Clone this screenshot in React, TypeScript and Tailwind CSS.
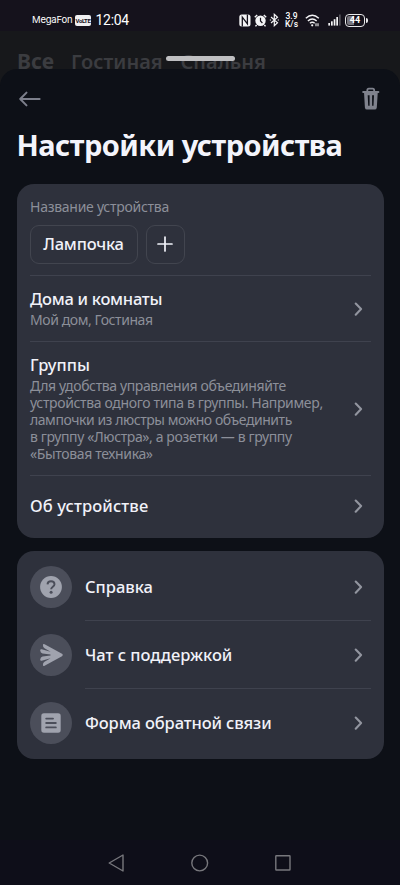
import type { ReactNode } from "react";

const ChevronIcon = () => (
    <svg width="24" height="24" viewBox="0 0 24 24" fill="none" stroke="#92959f" strokeWidth="2.1" strokeLinecap="round" strokeLinejoin="round" className="shrink-0">
        <path d="M8.7 6.500 L14.100 12.100 L8.700 17.700" />
    </svg>
);

const BackIcon = () => (
    <svg width="24" height="18" viewBox="0 0 24 18" fill="none" stroke="#7c7f8b" strokeWidth="2" strokeLinecap="round" strokeLinejoin="round">
        <path d="M21.600 9 H2.200 M8.500 2.600 L2.200 9 L8.500 15.400" />
    </svg>
);

const TrashIcon = () => (
    <svg width="18" height="24" viewBox="0 0 18 24" fill="none">
        <path d="M5.3 4.6 V3.4 Q5.3 1.700 6.8 1.700 H10.7 Q12.2 1.700 12.2 3.4 V4.6" stroke="#7f828d" strokeWidth="1.8" />
        <path d="M1.2 5 H16.4" stroke="#7f828d" strokeWidth="2" strokeLinecap="round" />
        <path fillRule="evenodd" fill="#7f828d" d="M2 5 H15.8 L14.8 20.4 Q14.6 22.6 12.6 22.6 H5 Q3.100 22.6 2.9 20.4 Z M5.7 8.300 L6.2 18.8 H7.6 V8.300 Z M10.100 8.300 V18.8 H11.5 L12 8.300 Z" />
    </svg>
);

const HelpIcon = () => (
    <svg width="24" height="24" viewBox="0 0 24 24" fill="none">
        <circle cx="12" cy="12" r="10.9" fill="#a0a3ae" />
        <path d="M8.500 9.400 C8.600 7.400 10 6.300 12 6.300 C14.100 6.300 15.500 7.500 15.500 9.200 C15.500 11.700 12.100 11.700 12.100 14.300" stroke="#4b4e5a" strokeWidth="1.9" />
        <circle cx="12.100" cy="17.200" r="1.500" fill="#4b4e5a" />
    </svg>
);

const SendIcon = () => (
    <svg width="24" height="24" viewBox="0 0 24 24" fill="#a0a3ae">
        <path d="M5.600 1.200 Q4 0.600 3.900 2 Q3.900 4.300 5.500 5.200 L11.500 8.700 L2.700 6.200 Q1.100 5.900 1.200 7.500 Q1.400 10 3.600 10.400 L11.500 11.600 V12.400 L3.600 13.600 Q1.400 14 1.200 16.500 Q1.100 18.100 2.700 17.800 L11.500 15.300 L5.500 18.800 Q3.900 19.700 3.900 22 Q4 23.400 5.600 22.800 L23 13.200 Q24.500 12 23 10.800 Z" />
    </svg>
);

const FormIcon = () => (
    <svg width="24" height="24" viewBox="0 0 24 24" fill="none">
        <rect x="2.300" y="2.300" width="19.400" height="19.400" rx="2.600" fill="#a0a3ae" />
        <path d="M7.200 7.600 H14 M7.200 12 H16.800 M7.200 16.400 H16.800" stroke="#4b4e5a" strokeWidth="1.900" strokeLinecap="round" />
    </svg>
);

const StatusIcons = () => (
    <div className="flex items-center text-white">
        {/* nfc */}
        <svg width="12" height="13" viewBox="0 0 12 13">
            <rect x="0.300" y="0.500" width="11.200" height="12" rx="2.500" fill="#f4f4f6" />
            <path d="M3.300 12.500 V3.200 L8.400 9.800 V0.500" fill="none" stroke="#15121c" strokeWidth="1.300" />
        </svg>
        {/* alarm */}
        <svg width="13" height="13" viewBox="0 0 13 13" className="ml-[3px]">
            <circle cx="6.500" cy="6.800" r="5.200" fill="#f4f4f6" />
            <path d="M0.800 3.200 L3.200 0.900 M12.200 3.200 L9.800 0.900 M2.600 11 L1.500 12.400 M10.400 11 L11.500 12.400" stroke="#f4f4f6" strokeWidth="1.400" />
            <path d="M6.500 3.800 V7 L8.400 9" fill="none" stroke="#15121c" strokeWidth="1.200" />
        </svg>
        {/* bluetooth */}
        <svg width="11" height="14" viewBox="0 0 11 14" fill="none" stroke="#f4f4f6" strokeWidth="1.200" className="ml-[2px]">
            <path d="M2 4 L8.500 9.700 L5.300 12.700 V1.300 L8.500 4.300 L2 10" />
            <path d="M0.800 7 H2.100 M8.700 7 H10" />
        </svg>
        <div className="ml-[4.500px] w-[14px] text-center font-[Roboto] text-[8.500px] leading-[8px] font-medium">
            <div>3.9</div>
            <div>K/s</div>
        </div>
        {/* wifi */}
        <svg width="15" height="13" viewBox="0 0 15 13" fill="none" stroke="#f4f4f6" strokeWidth="1.400" className="ml-[6px]">
            <path d="M0.800 4.300 Q7.300 -1.600 13.800 4.300" />
            <path d="M2.900 6.900 Q7.300 2.900 11.700 6.900" />
            <path d="M4.900 9.300 Q7.300 7.200 9.700 9.300" />
            <circle cx="7.200" cy="11.300" r="1.100" fill="#f4f4f6" stroke="none" />
            <path d="M11 9.300 V12.300 M13 9.300 V12.300" strokeWidth="1.100" />
        </svg>
        {/* signal */}
        <svg width="13" height="12" viewBox="0 0 13 12" fill="#f4f4f6" className="ml-[8.500px]">
            <rect x="0.300" y="9" width="1.700" height="2.600" />
            <rect x="3" y="7.300" width="1.700" height="4.300" />
            <rect x="5.700" y="5.200" width="1.700" height="6.400" />
            <rect x="8.300" y="3" width="1.700" height="8.600" />
            <rect x="11" y="0.500" width="1.700" height="11.100" fill="#55535b" />
        </svg>
        <div className="ml-[4px] flex h-[13px] w-[20px] items-center rounded-[4px] border-[1.500px] border-[#e8e8ea] p-px">
            <div className="flex h-full w-full items-center justify-center rounded-[2px] bg-linear-to-r from-[#77757d] from-45% to-transparent to-45% font-[Roboto] text-[9px] leading-[9px] font-bold">44</div>
        </div>
        <div className="ml-px h-[5px] w-[2px] rounded-r bg-[#e8e8ea]" />
    </div>
);

const SettingRow = ({ title, tracking, className, children }: { title: string; tracking: string; className: string; children?: ReactNode }) => (
    <div className={`flex items-center justify-between ${className}`}>
        <div>
            <div className={`text-[16.500px] leading-5 font-medium text-[#f1f2f9] ${tracking}`}>{title}</div>
            {children}
        </div>
        <ChevronIcon />
    </div>
);

const HelpRow = ({ icon, title, tracking, last }: { icon: ReactNode; title: string; tracking: string; last?: boolean }) => (
    <div className="flex h-[68px] items-center gap-[12.500px]">
        <div className="flex size-[42.500px] shrink-0 items-center justify-center rounded-full bg-[#4b4e5a]">{icon}</div>
        <div className={`flex h-full flex-1 items-center justify-between border-b ${last ? "border-transparent" : "border-[#3f424e]"}`}>
            <span className={`text-[16.500px] leading-5 font-medium text-[#f1f2f9] ${tracking}`}>{title}</span>
            <ChevronIcon />
        </div>
    </div>
);

export default function App() {
    return (
        <div className="flex h-[885px] w-[400px] flex-col overflow-hidden bg-[#17181b] font-['Noto_Sans',sans-serif]">
            <div className="flex h-[31px] shrink-0 items-start justify-between bg-[#15121c] pt-[13px] pr-[32px] pl-[32px]">
                <div className="flex h-[14px] items-center text-white">
                    <span className="w-[43px] font-[Inter] text-[9.500px] leading-none tracking-[-0.200px]">MegaFon</span>
                    <span className="flex h-[11px] w-[16px] items-center justify-center rounded-[2px] bg-[#f0f0f2] font-[Roboto] text-[6px] font-bold tracking-[-0.400px] text-[#15121c]">VoLTE</span>
                    <span className="ml-[4.500px] font-[Roboto] text-[14px] leading-none tracking-[-0.300px]">12:04</span>
                </div>
                <div className="flex h-[14px] items-center">
                    <StatusIcons />
                </div>
            </div>

            <div className="relative flex h-[38px] shrink-0 text-[20px] leading-[27px] font-semibold text-[#3b3c40]">
                <div className="flex pt-[17px] pl-[17px] whitespace-nowrap">
                    <span className="w-[54px] text-[21px] font-bold">Все</span>
                    <span className="w-[109.500px]">Гостиная</span>
                    <span>Спальня</span>
                </div>
                <div className="absolute top-[25px] left-[166px] h-[4.500px] w-[68.500px] rounded-full bg-[#bfbfc1]" />
            </div>

            <div className="relative flex-1 rounded-t-[17px] bg-[#0d1017] px-[16.500px]">
                <div className="flex h-[60px] items-center justify-between pr-[4px] pl-[1.500px]">
                    <BackIcon />
                    <TrashIcon />
                </div>
                <h1 className="-mt-[4px] h-[59px] text-[29px] leading-[40px] font-bold tracking-[-0.520px] whitespace-nowrap text-[#f3f4fb]">Настройки устройства</h1>

                <div className="h-[354px] rounded-[17px] bg-[#2e313c] px-[13px]">
                    <div className="h-[92px] border-b border-[#3f424e] pt-[14px]">
                        <div className="pl-[0.500px] text-[14px] leading-[18px] tracking-[-0.270px] text-[#8c8f99]">Название устройства</div>
                        <div className="mt-[9px] flex gap-[8.500px]">
                            <div className="flex h-[38.500px] w-[108px] items-center justify-center rounded-[9px] border border-[#42454f] text-[16.500px] font-medium tracking-[-0.200px] text-[#f1f2f9]">Лампочка</div>
                            <div className="flex h-[38.500px] w-[38.500px] items-center justify-center rounded-[9px] border border-[#42454f]">
                                <svg width="16" height="16" viewBox="0 0 16 16" stroke="#f1f2f9" strokeWidth="1.700" strokeLinecap="round">
                                    <path d="M8 1 V15 M1 8 H15" />
                                </svg>
                            </div>
                        </div>
                    </div>
                    <SettingRow title="Дома и комнаты" tracking="tracking-[-0.260px]" className="h-[66px] border-b border-[#3f424e] pl-[0.500px]">
                        <div className="mt-[2px] text-[14px] leading-[17px] tracking-[-0.420px] text-[#8c8f99]">Мой дом, Гостиная</div>
                    </SettingRow>
                    <SettingRow title="Группы" tracking="tracking-normal" className="h-[134px] border-b border-[#3f424e] pl-[0.500px]">
                        <div className="mt-[2px] text-[14px] leading-[17px] tracking-[-0.380px] whitespace-nowrap text-[#8c8f99]">
                            <div>Для удобства управления объединяйте</div>
                            <div className="tracking-[-0.350px]">устройства одного типа в группы. Например,</div>
                            <div className="tracking-[-0.450px]">лампочки из люстры можно объединить</div>
                            <div>в группу «Люстра», а розетки — в группу</div>
                            <div className="tracking-[-0.360px]">«Бытовая техника»</div>
                        </div>
                    </SettingRow>
                    <SettingRow title="Об устройстве" tracking="tracking-[0.120px]" className="h-[60px] pl-[0.500px]" />
                </div>

                <div className="mt-[12.500px] h-[208.500px] rounded-[17px] bg-[#2e313c] px-[13px] pt-[2.500px]">
                    <HelpRow icon={<HelpIcon />} title="Справка" tracking="tracking-normal pl-[0.500px]" />
                    <HelpRow icon={<SendIcon />} title="Чат с поддержкой" tracking="tracking-normal pl-[0.500px]" />
                    <HelpRow icon={<FormIcon />} title="Форма обратной связи" tracking="tracking-[-0.120px] pl-[0.500px]" last />
                </div>
            </div>

            <div className="flex h-[45px] shrink-0 items-center justify-center gap-[66px] bg-[#0e0e19] pt-px">
                <svg width="18" height="18" viewBox="0 0 18 18" fill="none" stroke="#77777c" strokeWidth="1.400" strokeLinejoin="round">
                    <path d="M16 1 V17 L2.200 9 Z" />
                </svg>
                <svg width="18" height="18" viewBox="0 0 18 18" fill="none" stroke="#77777c" strokeWidth="1.400">
                    <circle cx="8.700" cy="9" r="7.900" />
                </svg>
                <svg width="18" height="18" viewBox="0 0 18 18" fill="none" stroke="#77777c" strokeWidth="1.400">
                    <rect x="0.800" y="1.800" width="14.200" height="14.200" rx="0.500" />
                </svg>
            </div>
        </div>
    );
}
